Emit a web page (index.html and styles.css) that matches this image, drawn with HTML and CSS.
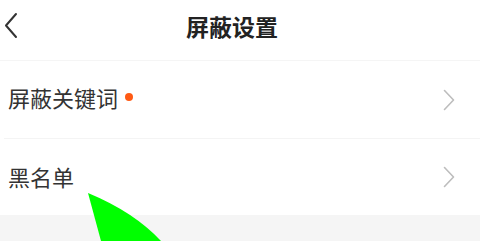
FILE: index.html
```html
<!DOCTYPE html>
<html lang="zh-CN">
<head>
<meta charset="utf-8">
<title>屏蔽设置</title>
<link rel="stylesheet" href="styles.css">
</head>
<body>
<div class="page">
  <header class="header">
    <svg class="back" width="24" height="60" viewBox="0 0 24 60" aria-hidden="true">
      <polyline points="16,14 6,25.5 16,37" fill="none" stroke="#333" stroke-width="2" stroke-linecap="round" stroke-linejoin="round"/>
    </svg>
    <h1 class="title">屏蔽设置</h1>
    <span></span>
  </header>
  <ul class="list">
    <li class="row row-first">
      <span class="label label-first">屏蔽关键词<i class="dot"></i></span>
      <svg class="chev" width="12" height="22" viewBox="0 0 12 22" aria-hidden="true">
        <polyline points="1.5,1.5 10.5,11 1.5,20.5" fill="none" stroke="#bdbdbd" stroke-width="1.6" stroke-linecap="round" stroke-linejoin="round"/>
      </svg>
    </li>
    <li class="row row-last">
      <span class="label">黑名单</span>
      <svg class="chev" width="12" height="22" viewBox="0 0 12 22" aria-hidden="true">
        <polyline points="1.5,1.5 10.5,11 1.5,20.5" fill="none" stroke="#bdbdbd" stroke-width="1.6" stroke-linecap="round" stroke-linejoin="round"/>
      </svg>
    </li>
  </ul>
  <div class="band"></div>
  <svg class="arrow" width="480" height="241" viewBox="0 0 480 241" aria-hidden="true">
    <path d="M88 193 L101 241 L161 241 Q134 212 88 193 Z" fill="#00ff00"/>
  </svg>
</div>
</body>
</html>
```
FILE: styles.css
```css
html, body {
  margin: 0;
  padding: 0;
  background: #ffffff;
}
body {
  font-family: "Noto Sans CJK SC", "Noto Sans", sans-serif;
  color: #333333;
}
.page {
  position: relative;
  width: 480px;
  height: 241px;
  overflow: hidden;
  background: #ffffff;
}
.header {
  display: grid;
  grid-template-columns: 24px 1fr 40px;
  align-items: center;
  height: 60px;
  border-bottom: 1px solid #f5f5f5;
}
.back {
  display: block;
}
.title {
  margin: 0;
  padding-bottom: 8px;
  text-align: center;
  font-size: 23px;
  font-weight: 700;
  line-height: 30px;
  color: #222222;
}
.list {
  list-style: none;
  margin: 0;
  padding: 0;
}
.row {
  display: flex;
  align-items: center;
  justify-content: space-between;
  margin-left: 4px;
  padding: 0 25px 0 4px;
}
.row-first {
  height: 77px;
  border-bottom: 1px solid #f4f4f4;
}
.row-last {
  height: 76px;
}
.label {
  display: flex;
  align-items: center;
  font-size: 22px;
  line-height: 30px;
  padding-bottom: 2px;
  color: #333333;
}
.label-first {
  padding-bottom: 5px;
}
.dot {
  display: block;
  width: 8px;
  height: 8px;
  margin-left: 7px;
  border-radius: 50%;
  background: #ff5a14;
}
.chev {
  display: block;
}
.band {
  height: 26px;
  background: #f5f5f5;
}
.arrow {
  position: absolute;
  left: 0;
  top: 0;
  pointer-events: none;
}
```
